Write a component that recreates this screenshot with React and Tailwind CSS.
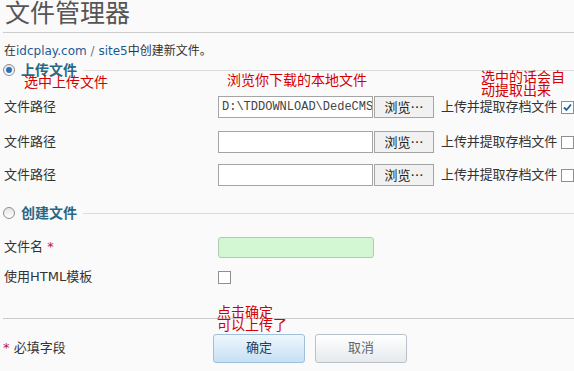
import React from 'react';

const font = { fontFamily: '"DejaVu Sans", "Noto Sans CJK SC", sans-serif' };

const Radio = ({ checked }) => (
    <span className="w-[12px] h-[12px] rounded-full border border-[#8d8d8d] bg-gradient-to-b from-[#e4e4e4] to-white flex items-center justify-center shrink-0">
        {checked && <span className="w-[6px] h-[6px] rounded-full bg-[#2c6fc0]" />}
    </span>
);

const Checkbox = ({ checked }) => (
    <span className="w-[13px] h-[13px] border border-[#8f8f8f] bg-white flex items-center justify-center shrink-0">
        {checked && (
            <svg width="11" height="11" viewBox="0 0 11 11">
                <path d="M2 5.5 L4.5 8 L9 2.5" stroke="#1f5f9c" strokeWidth="1.8" fill="none" />
            </svg>
        )}
    </span>
);

const SectionHead = ({ label, checked, className }) => (
    <div className={`flex items-center h-[16px] pl-[3px] ${className}`}>
        <Radio checked={checked} />
        <span className="ml-[6px] text-[14px] font-bold text-[#2a6785] leading-[16px]">{label}</span>
        <span className="flex-1 ml-[6px] h-px bg-[#dcdcdc]" />
    </div>
);

const FileRow = ({ value, checked, className }) => (
    <div className={`flex items-center h-[22px] pl-[4px] whitespace-nowrap ${className}`}>
        <span className="w-[214px] shrink-0 text-[13px] text-[#333]">文件路径</span>
        <div className="w-[155px] shrink-0 h-[22px] border border-[#a5a5a5] bg-white flex items-center pl-[3px] overflow-hidden text-[12px] text-[#444]" style={{ fontFamily: '"Liberation Mono", monospace' }}>
            {value}
        </div>
        <button className="ml-[1px] shrink-0 w-[60px] h-[22px] border border-[#a5a5a5] bg-[#f1f1f1] text-[13px] text-[#222] flex items-center justify-center" style={{ fontFamily: '"Noto Sans CJK SC", sans-serif' }}>浏览⋯</button>
        <span className="ml-[7px] shrink-0 text-[13px] tracking-[-0.1px] text-[#333]">上传并提取存档文件</span>
        <span className="ml-[4px] shrink-0"><Checkbox checked={checked} /></span>
    </div>
);

const Note = ({ children, className }) => (
    <div className={`absolute text-[14px] leading-[13px] text-[#d40000] whitespace-nowrap ${className}`}>{children}</div>
);

export default function App() {
    return (
        <div className="w-[574px] h-[371px] bg-[#fafafa] relative overflow-hidden" style={font}>
            <h1 className="h-[33px] pl-[2px] border-b border-[#cccccc] text-[25px] leading-[28px] text-[#555] font-normal ml-[3px]">文件管理器</h1>

            <p className="mt-[10px] pl-[4px] text-[12px] leading-[16px] text-[#333]">
                在<span className="text-[#1c5a94]">idcplay.com</span> <span className="text-[#777]">/</span> <span className="text-[#1c5a94]">site5</span>中创建新文件。
            </p>

            <SectionHead label="上传文件" checked className="mt-[3px]" />

            <FileRow value="D:\TDDOWNLOAD\DedeCMS-V5.7" checked className="mt-[18px]" />
            <FileRow className="mt-[13px]" />
            <FileRow className="mt-[11px]" />

            <SectionHead label="创建文件" className="mt-[19px]" />

            <div className="flex items-center h-[22px] pl-[4px] mt-[15px]">
                <span className="w-[214px] text-[13px] text-[#333]">文件名 <span className="text-[#c0143c]">*</span></span>
                <div className="w-[156px] h-[21px] border border-[#b3c9b3] rounded-[3px] bg-[#d3f6d3]" />
            </div>

            <div className="flex items-center h-[14px] pl-[4px] mt-[12px]">
                <span className="w-[214px] text-[13px] text-[#333]">使用HTML模板</span>
                <Checkbox />
            </div>

            <div className="mt-[34px] ml-[3px] border-t border-[#cccccc]" />

            <div className="flex items-center pl-[3px] mt-[14px] h-[30px]">
                <span className="w-[210px] text-[13px] text-[#333]"><span className="text-[#c0143c]">*</span> 必填字段</span>
                <button className="w-[92px] h-[29px] rounded-[3px] border border-[#9ec0dc] bg-gradient-to-b from-[#eef7fe] to-[#c6e0f4] text-[13px] text-[#1d3f60]">确定</button>
                <button className="ml-[10px] w-[92px] h-[29px] rounded-[3px] border border-[#b9c1c8] bg-gradient-to-b from-white to-[#e6eaed] text-[13px] text-[#666]">取消</button>
            </div>

            <Note className="left-[24px] top-[76px]">选中上传文件</Note>
            <Note className="left-[227px] top-[74px]">浏览你下载的本地文件</Note>
            <Note className="left-[481px] top-[71px]">选中的话会自<br />动提取出来</Note>
            <Note className="left-[217px] top-[306px]">点击确定<br />可以上传了</Note>
        </div>
    );
}
